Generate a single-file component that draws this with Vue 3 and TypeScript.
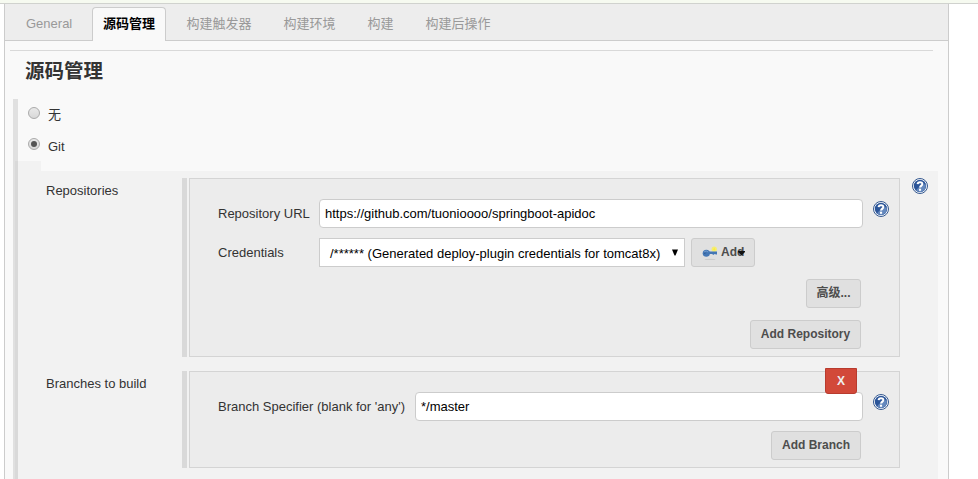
<script setup lang="ts">
import { ref, h } from 'vue'

const tabs: string[] = ['General', '源码管理', '构建触发器', '构建环境', '构建', '构建后操作']
const active = ref(1)
const scm = ref('git')
const url = ref('https://github.com/tuonioooo/springboot-apidoc')
const branch = ref('*/master')

const HelpIcon = () =>
  h('svg', { width: 16, height: 16, viewBox: '0 0 16 16' }, [
    h('circle', { cx: 8, cy: 8, r: 7.5, fill: '#fff', stroke: '#34588f', 'stroke-width': 1 }),
    h('circle', { cx: 8, cy: 8, r: 6.2, fill: '#2b5599' }),
    h('path', { d: 'M4 12.3A5.8 5.8 0 0 0 13.8 8.2V6Q8 7 4 12.3Z', fill: '#6488bd' }),
    h('path', {
      d: 'M5.6 6.1C5.7 3.6 10.4 3.4 10.4 6C10.4 7.6 8.1 7.7 8.1 9.6',
      fill: 'none',
      stroke: '#fff',
      'stroke-width': 2,
    }),
    h('rect', { x: 7, y: 10.7, width: 2.1, height: 2.1, fill: '#fff' }),
  ])
</script>

<template>
  <div class="page">
    <div class="strip"></div>
    <main class="config">
      <nav class="tabs">
        <div
          v-for="(tab, i) in tabs"
          :key="tab"
          class="tab"
          :class="{ active: i === active }"
          @click="active = i"
        >{{ tab }}</div>
      </nav>
      <div class="rule"></div>
      <h2>源码管理</h2>
      <section class="scm">
        <label class="option" @click="scm = 'none'"><i class="radio" :class="{ on: scm === 'none' }"></i>无</label>
        <label class="option git" @click="scm = 'git'"><i class="radio" :class="{ on: scm === 'git' }"></i>Git</label>
        <div class="nested">
          <div class="row repos">
            <div class="name">Repositories</div>
            <div class="bar"></div>
            <div class="box">
              <div class="field">
                <span class="label">Repository URL</span>
                <div class="input">{{ url }}</div>
                <HelpIcon class="help" />
              </div>
              <div class="field second">
                <span class="label">Credentials</span>
                <div class="select">
                  <span>/****** (Generated deploy-plugin credentials for tomcat8x)</span>
                  <svg class="caret" width="6" height="7" viewBox="0 0 6 7"><path d="M0 0.5H6L3.5 6.5H2.5Z" fill="#000" /></svg>
                </div>
                <button class="btn add">
                  <svg class="key" width="16" height="16" viewBox="0 0 16 16">
                    <ellipse cx="8" cy="14.4" rx="5.5" ry="0.7" fill="#ccc" />
                    <circle cx="12.2" cy="4.2" r="2.7" fill="#f4ec78" />
                    <path d="M12.2 2.6l.5 1.1 1 .5-1 .5-.5 1-.5-1-1-.5 1-.5Z" fill="#fff02c" />
                    <path d="M7 6.6H15V9.4H13.4V8.9H12.2V9.8H10.6V9H7Z" fill="#4477b5" />
                    <ellipse cx="4.3" cy="8.2" rx="3.6" ry="3.5" fill="#4477b5" />
                    <path d="M2 7.1Q4.2 4.8 6.2 7" stroke="#79a1d1" fill="none" />
                    <circle cx="2.8" cy="8.2" r=".8" fill="#305c94" />
                  </svg>
                  <span>Add</span>
                  <svg class="add-caret" width="7" height="7" viewBox="0 0 7 7"><path d="M0 2H7V3L4 6H3L0 3Z" fill="#111" /></svg>
                </button>
              </div>
              <div class="actions"><button class="btn w-adv">高级...</button></div>
              <div class="actions"><button class="btn w-repo">Add Repository</button></div>
            </div>
            <HelpIcon class="row-help" />
          </div>
          <div class="row branches">
            <div class="name">Branches to build</div>
            <div class="bar"></div>
            <div class="box">
              <button class="delete">X</button>
              <div class="field">
                <span class="label">Branch Specifier (blank for 'any')</span>
                <div class="input">{{ branch }}</div>
                <HelpIcon class="help" />
              </div>
              <div class="actions"><button class="btn w-branch">Add Branch</button></div>
            </div>
          </div>
        </div>
      </section>
    </main>
  </div>
</template>

<style>
body { margin: 0; background: #fff; overflow: hidden; }
</style>

<style scoped>
* { box-sizing: border-box; }
.page {
  width: 978px; height: 479px; overflow: hidden; display: flex; flex-direction: column;
  font: 13px/16px "Liberation Sans", "Noto Sans CJK SC", sans-serif; color: #333;
}
.strip { height: 4px; flex: none; background: #f6faf0; border-bottom: 1px solid #d0d2ce; }
.config {
  flex: 1; width: 945px; margin-left: 4px; background: #f9f9f9;
  border: solid #ccc; border-width: 0 1px; min-height: 0;
}
.tabs { height: 37px; background: #ededed; border-bottom: 1px solid #ccc; display: flex; padding: 3px 0 0 9px; }
.tab { height: 34px; padding: 0 11px; margin-right: 8px; line-height: 32px; color: #999; border: 1px solid transparent; border-bottom: 0; white-space: nowrap; }
.tab:first-child { width: 67px; margin-right: 11px; }
.tab.active { width: 74px; padding: 0 10px; margin-right: 8.5px; background: #f9f9f9; color: #000; font-weight: bold; border-color: #ccc; border-radius: 4px 4px 0 0; }
.rule { height: 1px; margin: 9px 15px 0 5px; background: #d9d9d9; }
h2 { margin: 5px 0 0 20px; height: 30px; line-height: 31px; font-size: 19.5px; }
.scm { margin: 13px 10px 0 8px; height: 400px; border-left: 5px solid #e0e0e0; }
.option { height: 31px; display: flex; padding-left: 10px; align-items: flex-start; line-height: 32px; }
.option.git { line-height: 33px; }
.radio { width: 12px; height: 12px; margin: 8px 8px 0 0; border: 1px solid #aaa; border-radius: 50%; background: linear-gradient(#e9e9e9, #d8d8d8); display: flex; align-items: center; justify-content: center; }
.radio.on::after { content: ""; width: 6px; height: 6px; border-radius: 50%; background: #555; }
.nested {
  margin-left: -3px; height: 338px; border-left: 3px solid #d9d9d9;
  padding-top: 17px;
  background: linear-gradient(#f9f9f9, #f9f9f9) 23px 0 / 900px 10px no-repeat, #f2f2f2;
}
.row { display: flex; align-items: stretch; }
.repos { height: 179px; }
.branches { height: 97px; margin-top: 14px; }
.name { width: 164px; padding: 5px 0 0 28px; }
.bar { width: 5px; margin-right: 2px; background: #d9d9d9; }
.box { position: relative; width: 711px; border: 1px solid #d4d4d4; background: #ececec; padding: 20px 18px 0 28px; }
.row-help { margin-left: 12px; }
.field { display: flex; height: 29px; }
.second { margin-top: 10px; }
.label { width: 101px; flex: none; line-height: 29px; white-space: nowrap; }
.branches .label { width: 197px; }
.input { flex: none; width: 544px; margin-right: 10px; border: 1px solid #ccc; border-radius: 4px; background: #fff; color: #000; line-height: 27px; padding-left: 5px; white-space: nowrap; }
.branches .input { width: 448px; }
.help { flex: none; margin: 2px -8px 0 0; }
.select { width: 366px; height: 29px; border: 1px solid #ccc; background: #fff; color: #000; line-height: 29px; padding: 0 6px 0 10px; display: flex; justify-content: space-between; white-space: nowrap; }
.caret { margin-top: 10px; }
.btn { height: 29px; padding: 0; font: bold 12px/25px "Liberation Sans", "Noto Sans CJK SC", sans-serif; color: #4d4d4d; background: #e0e0e0; border: 1px solid #ccc; border-radius: 3px; white-space: nowrap; }
.add { position: relative; display: flex; width: 64px; margin-left: 6px; padding: 0 0 0 10px; align-items: flex-start; }
.key { margin-top: 6px; }
.add span { margin-left: 3px; line-height: 27px; }
.add-caret { position: absolute; left: 46px; top: 10px; }
.actions { display: flex; justify-content: flex-end; margin: 12px 20px 0 0; }
.branches .actions { margin-top: 10px; }
.w-adv { width: 55px; }
.w-repo { width: 111px; }
.w-branch { width: 90px; }
.delete { position: absolute; left: 635px; top: -4px; width: 32px; height: 26px; padding: 0; background: #d24939; border: 1px solid #b83b2e; border-radius: 0 0 3px 3px; color: #eee; font: bold 12px/22px "Liberation Sans", sans-serif; }
</style>
